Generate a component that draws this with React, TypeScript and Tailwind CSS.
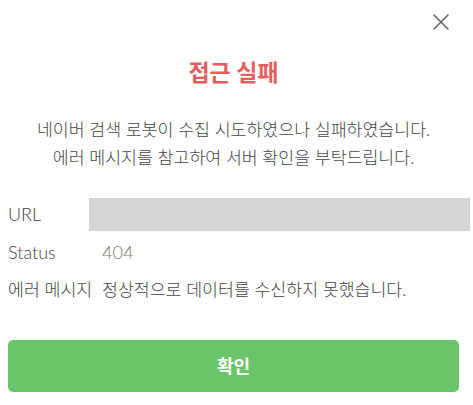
import React from "react";

export default function App() {
  return (
    <div
      className="w-[473px] h-[405px] bg-white relative overflow-hidden text-[#444]"
      style={{ fontFamily: "Lato, 'Noto Sans CJK KR', sans-serif" }}
    >
      <button className="absolute left-[432px] top-[13px] w-[18px] h-[18px] text-[#666]" aria-label="close">
        <svg viewBox="0 0 18 18" width="18" height="18" fill="none" stroke="currentColor" strokeWidth="1.6" strokeLinecap="round">
          <path d="M2 2 L16 16 M16 2 L2 16" />
        </svg>
      </button>
      <div className="pt-[58px] pl-2 pr-[14px] flex flex-col">
        <h1 className="text-center text-[23px] leading-[28px] font-bold text-[#e25f5d]">접근 실패</h1>
        <p className="mt-[30px] text-center text-[17.3px] leading-[28px] font-light text-[#444]">
          네이버 검색 로봇이 수집 시도하였으나 실패하였습니다.
          <br />
          에러 메시지를 참고하여 서버 확인을 부탁드립니다.
        </p>
        <div className="mt-[25px] flex flex-col gap-1 text-[17.3px] font-light">
          <div className="flex items-center h-[34px]">
            <span className="w-[81px] shrink-0 text-[18px]">URL</span>
            <div className="w-[381px] shrink-0 h-[33px] bg-[#d4d5d7]" />
          </div>
          <div className="flex items-center h-[34px]">
            <span className="w-[94px] shrink-0 text-[18px]">Status</span>
            <span className="text-[#777] text-[18px]">404</span>
          </div>
          <div className="flex items-center h-[34px]">
            <span className="w-[94px] shrink-0">에러 메시지</span>
            <span>정상적으로 데이터를 수신하지 못했습니다.</span>
          </div>
        </div>
        <button className="mt-[33px] h-[52px] w-full rounded-[5px] bg-[#6ac46a] text-white text-[18px] font-bold">
          확인
        </button>
      </div>
    </div>
  );
}
